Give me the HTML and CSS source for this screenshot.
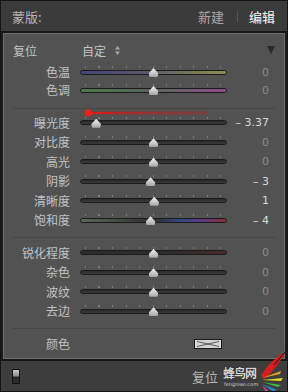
FILE: index.html
```html
<!DOCTYPE html>
<html lang="zh">
<head>
  <meta charset="UTF-8" />
  <title>蒙版</title>
  <link rel="stylesheet" href="styles.css">
</head>
<body>
  <div class="app">

    <header class="head">
      <span class="head-title">蒙版:</span>
      <nav class="tabs">
        <span class="tab">新建</span>
        <span class="tab-sep"></span>
        <span class="tab on">编辑</span>
      </nav>
    </header>

    <section class="panel">
      <div class="top-row">
        <span class="reset">复位</span>
        <span class="preset">自定
          <svg class="updown" width="5" height="9" viewBox="0 0 5 9"><path d="M2.5 0 L5 3.5 H0 Z M0 5.5 H5 L2.5 9 Z" fill="#aaa"/></svg>
        </span>
        <span class="collapse"></span>
      </div>

      <div class="group tight">
        <div class="row"><span class="label">色温</span><div class="slider"><div class="track temp"></div><span class="thumb" style="left:50%"></span></div><span class="value">0</span></div>
        <div class="row"><span class="label">色调</span><div class="slider"><div class="track tint"></div><span class="thumb" style="left:50%"></span></div><span class="value">0</span></div>
      </div>

      <div class="divider"></div>

      <div class="group">
        <span class="mark"></span>
        <div class="row"><span class="label">曝光度</span><div class="slider"><div class="track"></div><span class="thumb" style="left:11%"></span></div><span class="value set">– 3.37</span></div>
        <div class="row"><span class="label">对比度</span><div class="slider"><div class="track"></div><span class="thumb" style="left:50%"></span></div><span class="value">0</span></div>
        <div class="row"><span class="label">高光</span><div class="slider"><div class="track"></div><span class="thumb" style="left:50%"></span></div><span class="value">0</span></div>
        <div class="row"><span class="label">阴影</span><div class="slider"><div class="track"></div><span class="thumb" style="left:48%"></span></div><span class="value set">– 3</span></div>
        <div class="row"><span class="label">清晰度</span><div class="slider"><div class="track"></div><span class="thumb" style="left:50.5%"></span></div><span class="value set">1</span></div>
        <div class="row"><span class="label">饱和度</span><div class="slider"><div class="track sat"></div><span class="thumb" style="left:48%"></span></div><span class="value set">– 4</span></div>
      </div>

      <div class="divider"></div>

      <div class="group">
        <div class="row"><span class="label">锐化程度</span><div class="slider"><div class="track sharp"></div><span class="thumb" style="left:50%"></span></div><span class="value">0</span></div>
        <div class="row"><span class="label">杂色</span><div class="slider"><div class="track"></div><span class="thumb" style="left:50%"></span></div><span class="value">0</span></div>
        <div class="row"><span class="label">波纹</span><div class="slider"><div class="track"></div><span class="thumb" style="left:50%"></span></div><span class="value">0</span></div>
        <div class="row"><span class="label">去边</span><div class="slider"><div class="track"></div><span class="thumb" style="left:50%"></span></div><span class="value">0</span></div>
      </div>

      <div class="divider"></div>

      <div class="row color-row">
        <span class="label">颜色</span>
        <div class="swatch-cell">
          <svg class="swatch" width="28" height="10" viewBox="0 0 28 10">
            <rect x="0.5" y="0.5" width="27" height="9" fill="#d4d4d4" stroke="#1a1a1a"/>
            <path d="M3 2.5 L14 5 L25 2.5 M3 7.5 L14 5 L25 7.5" stroke="#5a5a5a" stroke-width="1" fill="none"/>
          </svg>
        </div>
      </div>
    </section>

    <footer class="foot">
      <span class="toggle"></span>
      <span class="foot-reset">复位</span>
      <div class="watermark">
        <span class="wm-name">蜂鸟网</span>
        <span class="wm-url">fengniao.com</span>
        <svg class="wm-feather" width="34" height="44" viewBox="0 0 34 44">
          <path d="M6 27 Q14 12 31 2 Q24 16 10 30 Z" fill="#d81e1e"/>
          <path d="M31 2 Q25 9 19 16" stroke="#111" stroke-width="1" fill="none"/>
          <path d="M7 29 L26 22 L25 25 Z" fill="#f0a020"/>
          <path d="M7 31 L28 29 L26 32 Z" fill="#e8d81e"/>
          <path d="M7 33 L26 36 L23 38 Z" fill="#3cbf3c"/>
          <path d="M7 35 L22 41 L18 42 Z" fill="#2a8ee0"/>
          <path d="M7 36 L14 43 L11 43 Z" fill="#e04aa0"/>
        </svg>
      </div>
    </footer>

  </div>
</body>
</html>
```

FILE: styles.css
```css
body {
  margin: 0;
  background: #141414;
  font-family: "Noto Sans CJK SC", "Noto Sans", sans-serif;
}

.app {
  width: 288px;
  height: 392px;
  box-sizing: border-box;
  border: 1px solid #141414;
  background: #1c1c1c;
  display: flex;
  flex-direction: column;
  overflow: hidden;
}

/* header */

.head {
  height: 32px;
  box-sizing: border-box;
  flex: none;
  background: #3b3b3b;
  border-bottom: 2px solid #161616;
  display: flex;
  align-items: center;
  justify-content: space-between;
  padding: 0 12px 0 11px;
}

.head-title {
  font-size: 13px;
  color: #b4b4b4;
}

.tabs {
  display: flex;
  align-items: center;
}

.tab {
  font-size: 13px;
  color: #a9a9a9;
}

.tab.on {
  color: #fafafa;
}

.tab-sep {
  width: 1px;
  height: 11px;
  background: #555;
  margin: 0 11px 0 13px;
}

/* panel */

.panel {
  position: relative;
  flex: none;
  height: 326px;
  box-sizing: border-box;
  margin: 0 2px;
  background: #525252;
  border: 1px solid #6d6d6d;
  padding-top: 7px;
}

.top-row {
  height: 18px;
  display: flex;
  align-items: center;
  padding: 0 9px;
  font-size: 12px;
  color: #c4c4c4;
}

.preset {
  margin-left: 45px;
  display: flex;
  align-items: center;
  gap: 9px;
}

.collapse {
  margin-left: auto;
  width: 0;
  height: 0;
  border-left: 4px solid transparent;
  border-right: 4px solid transparent;
  border-top: 8px solid #2a2a2a;
}

.group {
  position: relative;
}

.group.tight {
  margin-top: 4px;
}

.row {
  height: 19.5px;
  display: grid;
  grid-template-columns: 76px 147px 42px;
  align-items: center;
}

.tight .row {
  height: 18px;
}

.label {
  font-size: 12px;
  color: #c2c2c2;
  text-align: right;
  padding-right: 10px;
  line-height: 1;
}

.value {
  font-family: "DejaVu Sans", sans-serif;
  font-size: 11px;
  color: #8c8c8c;
  text-align: right;
  line-height: 1;
}

.value.set {
  color: #dadada;
}

.divider {
  height: 1px;
  background: #474747;
  margin: 9px 8px 4px;
}

.group + .divider {
  margin-top: 8px;
}

.tight + .divider {
  margin-top: 9px;
}

.group + .divider + .group + .divider {
  margin-top: 7px;
  margin-bottom: 5px;
}

/* sliders */

.slider {
  position: relative;
  height: 100%;
  display: flex;
  align-items: center;
}

.slider::before {
  content: "";
  position: absolute;
  left: 5px;
  width: 137px;
  top: calc(50% - 6px);
  height: 2px;
  background: repeating-linear-gradient(90deg, #7a7a7a 0 1px, transparent 1px 13.5px);
}

.track {
  width: 100%;
  height: 5px;
  box-sizing: border-box;
  border: 1px solid #1b1b1b;
  border-radius: 3px;
  background: linear-gradient(#2a2a2a, #3a3a3a);
}

.track.temp {
  background: linear-gradient(90deg, #44447a, #5a5a6a 45%, #7a7a52 80%, #8c8c58);
}

.track.tint {
  background: linear-gradient(90deg, #4c7a4c, #5a665a 45%, #7a5a7a 80%, #8e4c8e);
}

.track.sat {
  background: linear-gradient(90deg, #5c6a5c, #3a3f3a 35%, #303030 50%, #304a7a 68%, #5a3a8a 82%, #8a2c34 100%);
}

.track.sharp {
  background: linear-gradient(90deg, #2c2c2c 60%, #4a2c2c);
}

.thumb {
  position: absolute;
  top: 50%;
  width: 11px;
  height: 9px;
  transform: translate(-50%, -45%);
  background: linear-gradient(#f4f4f4, #a6a6a6);
  clip-path: polygon(50% 0, 95% 62%, 85% 100%, 15% 100%, 5% 62%);
}

/* red annotation on exposure */

.mark {
  position: absolute;
  left: 84px;
  top: -1px;
  width: 120px;
  height: 2px;
  background: linear-gradient(90deg, #e01818, rgba(190, 30, 30, 0.7) 40%, rgba(190, 30, 30, 0.35));
  box-shadow: 0 0 2px rgba(220, 20, 20, 0.6);
}

.mark::before {
  content: "";
  position: absolute;
  left: -3px;
  top: -2px;
  width: 6px;
  height: 6px;
  border-radius: 50%;
  background: #ff1a1a;
  box-shadow: 0 0 3px #ff2020;
}

/* colour row */

.color-row {
  height: 19px;
}

.swatch-cell {
  grid-column: 2 / 4;
  padding-left: 114px;
  display: flex;
  align-items: center;
}

/* footer */

.foot {
  position: relative;
  flex: 1;
  background: #3d3d3d;
  border-top: 2px solid #161616;
  display: flex;
  align-items: center;
  padding: 0 11px;
}

.toggle {
  width: 8px;
  height: 15px;
  box-sizing: border-box;
  border: 1px solid #111;
  background: linear-gradient(#c8c8c8, #8a8a8a 48%, #262626 52%, #303030);
}

.foot-reset {
  margin-left: 172px;
  font-size: 13px;
  color: #b4b4b4;
}

.watermark {
  position: absolute;
  left: 220px;
  top: -8px;
  width: 68px;
  height: 40px;
}

.wm-name {
  position: absolute;
  left: 2px;
  top: 11px;
  font-size: 12px;
  font-weight: bold;
  color: #d8d8d8;
  letter-spacing: -1px;
  text-shadow: 0 0 1px #000;
}

.wm-url {
  position: absolute;
  left: 3px;
  top: 28px;
  font-family: "DejaVu Sans", sans-serif;
  font-size: 5px;
  color: #cfcfcf;
}

.wm-feather {
  position: absolute;
  left: 34px;
  top: -4px;
}
```
